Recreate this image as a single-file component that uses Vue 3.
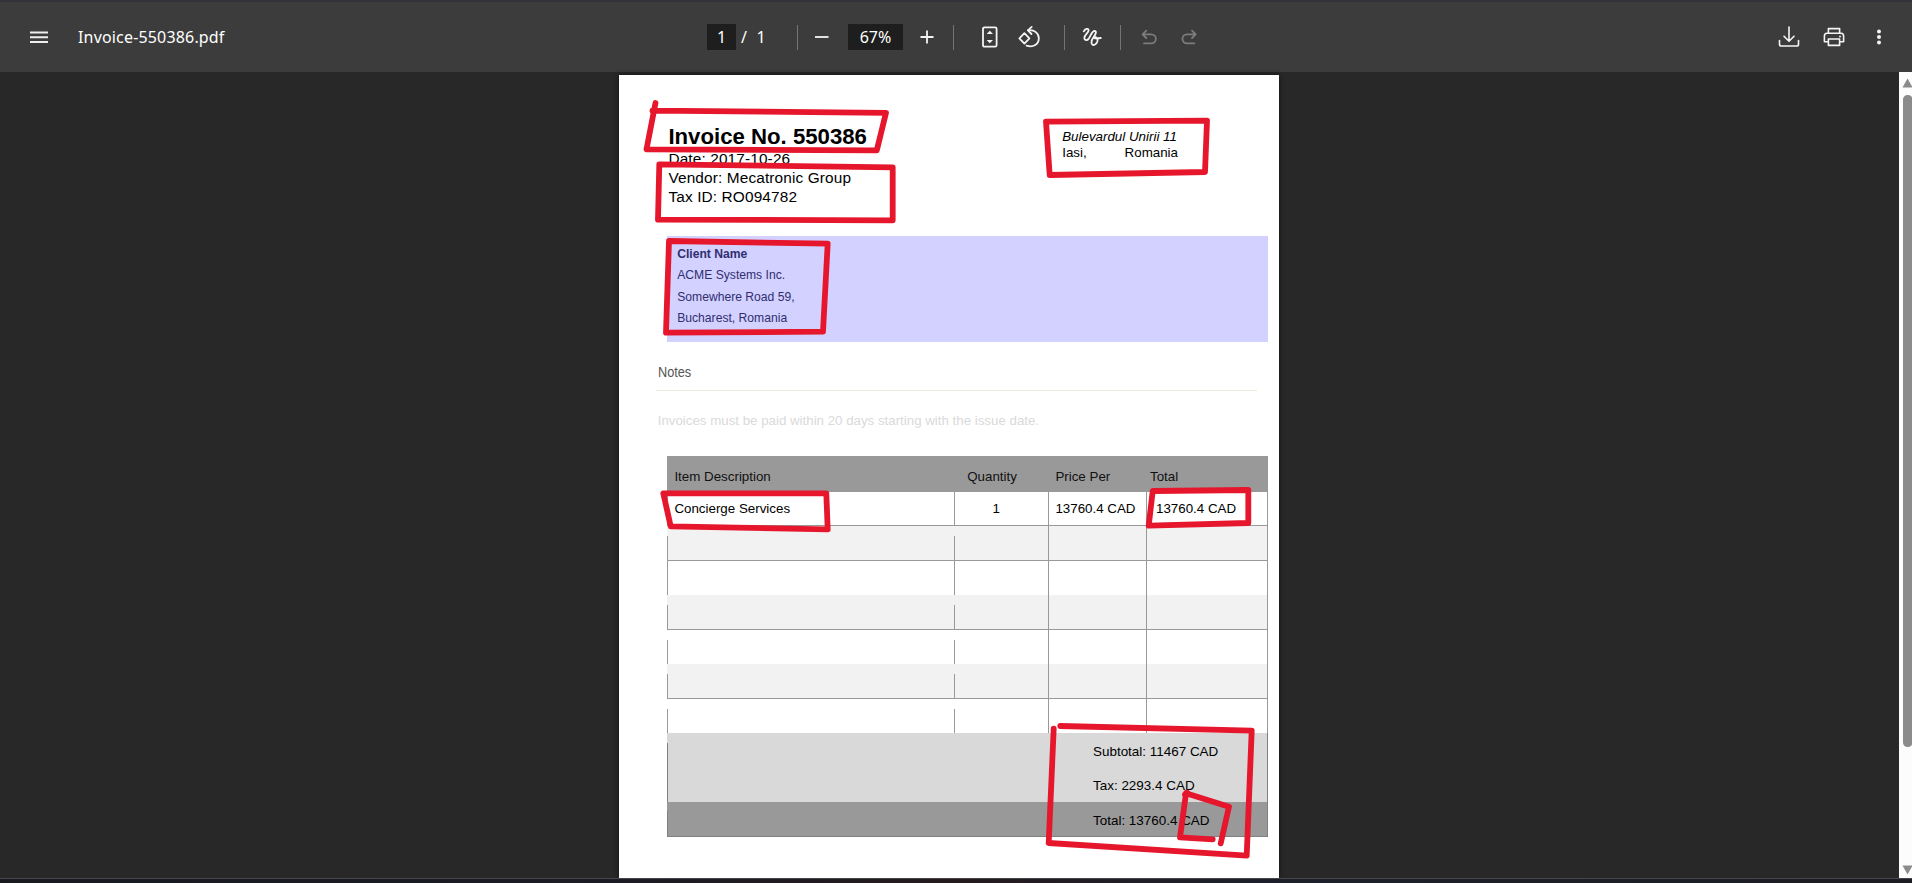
<script setup>
const rows = [
  { cells: ['Concierge Services', '1', '13760.4 CAD', '13760.4 CAD'], height: 34, gap: 0, line: true },
  { cells: ['', '', '', ''], height: 35, gap: 10, line: true, shaded: true },
  { cells: ['', '', '', ''], height: 34, gap: 0 },
  { cells: ['', '', '', ''], height: 35, gap: 10, line: true, shaded: true },
  { cells: ['', '', '', ''], height: 34, gap: 10 },
  { cells: ['', '', '', ''], height: 35, gap: 10, line: true, shaded: true },
  { cells: ['', '', '', ''], height: 34, gap: 10 }
]
const marks = [
  'M36.5 28 L27.5 74.3 L257.8 75.3 L267 37.8 L33.5 35.7',
  'M40.3 89.3 L273.7 92.3 L273.7 145.3 L39 144.7 Z',
  'M427 46.7 L588 45.7 L586 97 L430.7 100 Z',
  'M50 166 L208.7 168.7 L204 256.7 L47 257.7 Z',
  'M44.3 418.3 L207.3 418.3 L208.7 454.3 L51.7 451.3 Z',
  'M533.7 416 L629.3 415 L629.3 448 L529.7 450.7 Z',
  'M441.3 651 L632.7 655.7 L627.7 780.7 L429.7 768 L434.7 653.7',
  'M601.7 768.3 L610 731.7 L567 718.3 L561 762.3 L593.7 764.3',
  'M566 719.5 L568 717.5'
]
</script>

<template>
  <div class="viewer">
    <header class="toolbar">
      <div class="left">
        <svg class="menu" width="20" height="14" viewBox="0 0 20 14"><path d="M1 2.5H19M1 7.2H19M1 12H19" /></svg>
        <span class="name">Invoice-550386.pdf</span>
      </div>
      <div class="center">
        <span class="field page-no">1</span><span class="slash">/</span><span class="count">1</span>
        <i class="sep s1"></i>
        <svg class="ic minus" width="24" height="24" viewBox="0 0 24 24"><path d="M5 12H18.5" /></svg>
        <span class="field zoom">67%</span>
        <svg class="ic plus" width="24" height="24" viewBox="0 0 24 24"><path d="M5.5 12H18.5M12 5.5V18.5" /></svg>
        <i class="sep s2"></i>
        <svg class="ic fit" width="24" height="24" viewBox="0 0 24 24">
          <rect x="5" y="2.3" width="13.6" height="19.4" rx="1.5" />
          <path class="fill" d="M11.8 5.8 15 9H8.6ZM11.8 18.2 15 15H8.6Z" />
        </svg>
        <svg class="ic rotate" width="24" height="24" viewBox="0 0 24 24">
          <path d="M7.4 8.2 12.4 13.4 7.4 18.6 2.4 13.4Z" />
          <path d="M11.2 5.2C17.5 4.4 21.8 8.4 21.8 13.2C21.8 19.1 16.3 23 9.6 20.6" />
          <path d="M14.7 1.9 10.9 5.3 14.5 9" />
        </svg>
        <i class="sep s3"></i>
        <svg class="ic draw" width="24" height="24" viewBox="0 0 24 24">
          <path d="M3.8 6.4C5 4 8.4 2.6 8.6 5.2C8.8 7.6 4.4 9.8 4.3 13C4.3 15.6 7.2 15.8 8.8 13.6C10.6 11 11.8 6.2 14.4 6C17.2 6 15.6 9.4 13.8 11.8C12 14.4 10.8 16.8 11.8 18.9C13 21 16.4 19.8 17.4 16.6C18.2 13.8 16.2 11.6 14.6 12.2C13.4 13.6 17 13.8 20.8 13" />
        </svg>
        <i class="sep s4"></i>
        <svg class="ic undo dim" width="24" height="24" viewBox="0 0 24 24"><path d="M8.3 5.6 4.6 9.3 8.3 13M4.8 9.3H13.3A4.5 4.5 0 0 1 13.3 18.4H6" /></svg>
        <svg class="ic redo dim" width="24" height="24" viewBox="0 0 24 24"><path d="M15 5.6 18.7 9.3 15 13M18.5 9.3H10A4.5 4.5 0 0 0 10 18.4H17.3" /></svg>
      </div>
      <div class="right">
        <svg class="ic" width="24" height="24" viewBox="0 0 24 24"><path d="M12 2V16M7 11.2 12 16.2 17 11.2M2.5 15.6V19.2Q2.5 21 4.3 21H19.7Q21.5 21 21.5 19.2V15.6" /></svg>
        <svg class="ic print" width="24" height="24" viewBox="0 0 24 24">
          <path d="M6.4 8.2V3.6H17.6V8.2M6.4 16.8H2.4V11Q2.4 8.3 5 8.3H19Q21.6 8.3 21.6 11V16.8H17.6M6.4 14H17.6V20.4H6.4Z" />
          <circle class="fill" cx="18" cy="11.5" r="1" />
        </svg>
        <svg class="ic more" width="8" height="24" viewBox="0 0 8 24"><g class="fill"><circle cx="4" cy="6.4" r="2" /><circle cx="4" cy="12" r="2" /><circle cx="4" cy="17.6" r="2" /></g></svg>
      </div>
    </header>

    <main class="stage">
      <article class="page">
        <section class="head">
          <div class="ident">
            <h1>Invoice No. 550386</h1>
            <p>Date: 2017-10-26</p>
            <p>Vendor: Mecatronic Group</p>
            <p>Tax ID: RO094782</p>
          </div>
          <address>
            <em>Bulevardul Unirii 11</em>
            <div class="city"><span>Iasi,</span><span>Romania</span></div>
          </address>
        </section>

        <section class="client">
          <strong>Client Name</strong>
          <p>ACME Systems Inc.</p>
          <p>Somewhere Road 59,</p>
          <p>Bucharest, Romania</p>
        </section>

        <section class="notes">
          <h2><span>Notes</span></h2>
          <p>Invoices must be paid within 20 days starting with the issue date.</p>
        </section>

        <section class="items">
          <div class="row th"><span>Item Description</span><span>Quantity</span><span>Price Per</span><span>Total</span></div>
          <div
            v-for="(r, i) in rows" :key="i" class="row"
            :class="{ shaded: r.shaded, line: r.line }"
            :style="{ height: r.height + 'px', '--gap': r.gap + 'px' }"
          >
            <span v-for="(c, j) in r.cells" :key="j">{{ c }}</span>
          </div>
          <div class="sum sub">Subtotal: 11467 CAD</div>
          <div class="sum tax">Tax: 2293.4 CAD</div>
          <div class="sum total">Total: 13760.4 CAD</div>
        </section>

        <svg class="marks" width="660" height="803" viewBox="0 0 660 803">
          <path v-for="m in marks" :key="m" :d="m" />
        </svg>
      </article>
      <div class="scroll">
        <svg width="13" height="806" viewBox="0 0 13 806">
          <path d="M8.5 6.5 13.5 15.5H3.5Z" />
          <rect x="4" y="23" width="9.5" height="652" rx="4.6" />
          <path d="M8.5 802.5 13.5 793.5H3.5Z" />
        </svg>
      </div>
    </main>
    <footer class="edge"></footer>
  </div>
</template>

<style>
body { margin: 0; overflow: hidden; }
</style>

<style scoped>
* { box-sizing: border-box; }
.viewer { width: 1912px; height: 883px; display: flex; flex-direction: column; background: #282828; font-family: "Liberation Sans", Arial, sans-serif; overflow: hidden; }
h1, h2, p, address { margin: 0; font-weight: normal; font-style: normal; }
.toolbar { height: 72px; flex: none; border-top: 2px solid #323238; background: #3c3c3c; display: flex; align-items: center; color: #fff; font-family: "Noto Sans", sans-serif; font-size: 16px; }
.toolbar > div { display: flex; align-items: center; height: 26px; }
.left { width: 707px; padding-left: 28.5px; }
.menu path { fill: none; stroke: #eee; stroke-width: 1.9; }
.name { margin-left: 29.5px; letter-spacing: 0.17px; }
.field { height: 26px; line-height: 26px; background: #1e1e1e; text-align: center; }
.page-no { width: 29px; }
.zoom { width: 55px; margin-left: 14px; }
.slash { margin-left: 5px; width: 8px; }
.count { margin-left: 7.5px; width: 10.5px; }
.slash, .count { line-height: 26px; height: 26px; }
.sep { width: 1px; height: 25px; background: #747474; }
.s1 { margin-left: 30px; }
.ic { fill: none; stroke: #f4f4f4; stroke-width: 1.8; flex: none; stroke-linejoin: round; stroke-linecap: round; }
.ic .fill { fill: #f4f4f4; stroke: none; }
.minus { margin-left: 12px; stroke-linecap: butt; }
.plus { margin-left: 12px; stroke-linecap: butt; }
.s2 { margin-left: 14px; }
.fit { margin-left: 24px; }
.rotate { margin-left: 15px; }
.s3 { margin-left: 23px; }
.draw { margin-left: 15px; }
.s4 { margin-left: 16px; }
.undo { margin-left: 17px; }
.redo { margin-left: 15px; }
.dim { stroke: #7c7c7c; }
.right { margin-left: auto; padding-right: 29.5px; }
.right .ic { stroke-width: 1.6; }
.print { margin-left: 21px; }
.more { margin-left: 29px; }

.stage { height: 806px; flex: none; display: flex; justify-content: flex-end; }
.page { position: relative; width: 660px; height: 803px; margin-top: 3px; background: #fff; box-shadow: 0 0 5px #111; color: #000; }
.head { height: 161px; display: flex; }
.ident { width: 443px; padding: 49px 0 0 49.4px; font-size: 15.4px; line-height: 19px; }
.ident p { letter-spacing: 0.13px; }
h1 { margin-bottom: -1px; font-size: 22.2px; line-height: 26px; font-weight: bold; }
address { padding: 54px 0 0 0.2px; font-size: 13.35px; line-height: 16px; }
em { display: block; }
.city { display: flex; }
.city span:first-child { width: 62.4px; }
.client { margin-left: 48px; width: 601px; height: 106px; padding: 8px 0 0 10.2px; background: #d3d1ff; color: #302e70; font-size: 12.15px; line-height: 21.4px; }
.client strong { display: block; }
.notes { width: 601px; margin: 20px 0 0 37px; }
h2 { height: 29px; padding-left: 1.8px; border-bottom: 1px solid #e9e9dc; font-size: 15.5px; line-height: 20px; color: #555; }
h2 span { display: inline-block; transform: scaleX(.82); transform-origin: left; }
.notes p { margin: 21px 0 26px 1.7px; font-size: 13.3px; line-height: 18px; color: #dadada; white-space: nowrap; }
.items { margin-left: 48px; width: 601px; font-size: 13.35px; }
.row { display: grid; grid-template-columns: 287px 94px 98px 122px; line-height: 34px; border-right: 1px solid #999; }
.row span { padding-left: 7.4px; background: linear-gradient(#999, #999) left bottom / 1px 100% no-repeat; }
.row span:nth-child(-n+2) { background-size: 1px calc(100% - var(--gap, 0px)); }
.row:not(.th) span:nth-child(2) { padding-left: 38.5px; }
.row:not(.th) span:nth-child(4) { padding-left: 10px; }
.line { border-bottom: 1px solid #999; }
.shaded { background: #f2f2f2; }
.th { height: 36px; padding-top: 5px; line-height: 31px; background: #999; color: #111; }
.th span:nth-child(2) { padding-left: 13.2px; }
.th span:nth-child(4) { padding-left: 4px; }
.sum { padding-left: 426px; border-right: 1px solid #808080; font-size: 13.45px; background: linear-gradient(#808080, #808080) left bottom / 1px 100% no-repeat #d9d9d9; }
.sub { height: 35px; line-height: 37px; background-size: 1px 25px; }
.tax { height: 34px; line-height: 35px; }
.total { height: 35px; line-height: 37px; background-color: #999; background-size: 1px 25px; border-bottom: 1px solid #808080; overflow: hidden; }
.marks { position: absolute; left: 0; top: 0; }
.marks path { fill: none; stroke: #e6172c; stroke-width: 5.8; stroke-linecap: round; stroke-linejoin: round; }
.scroll { margin-left: 620px; width: 13px; height: 806px; background: #fcfcfc; }
.scroll svg { display: block; fill: #8b8b8b; }
.edge { position: relative; height: 5px; flex: none; border-top: 1px solid #45474a; background: linear-gradient(90deg, #17191f 0%, #1b1c24 30%, #241a1e 50%, #1d202a 65%, #1b1d22 100%); }
</style>
